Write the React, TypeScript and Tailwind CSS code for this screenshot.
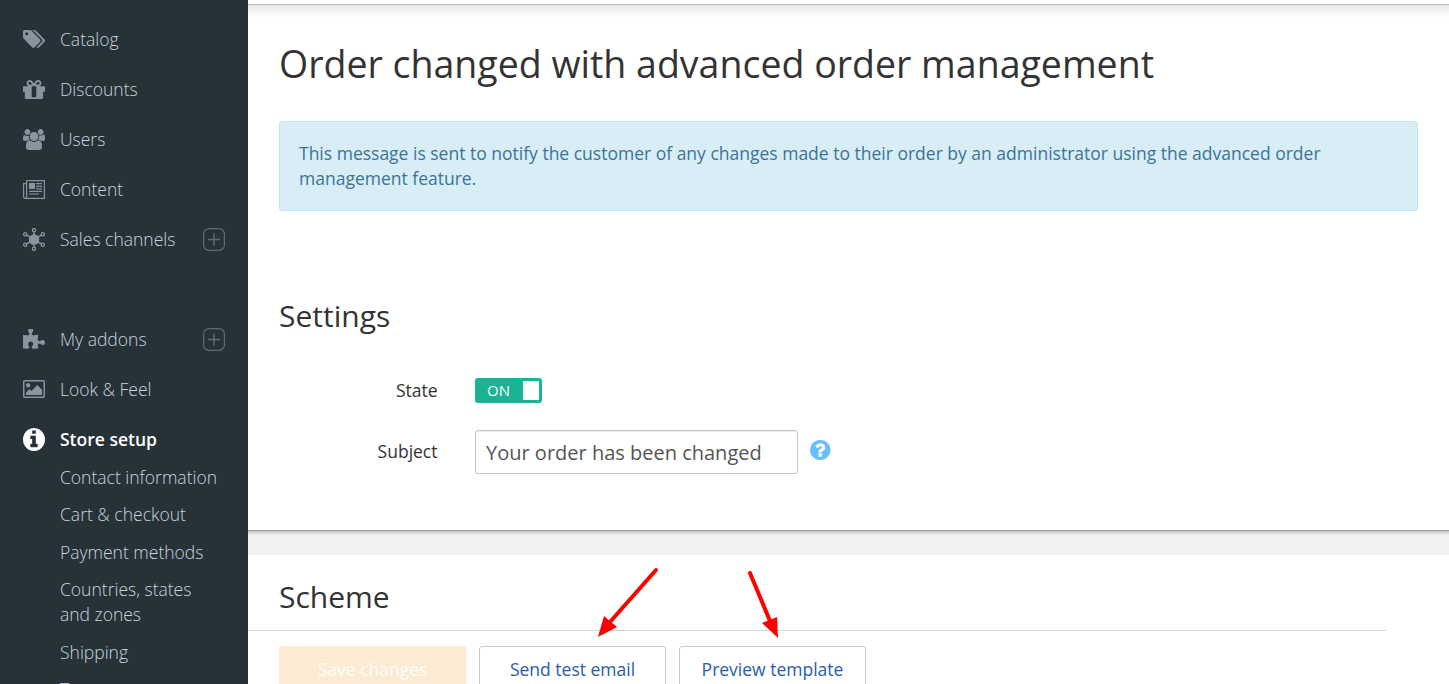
import type { ReactNode } from 'react';

type IconProps = { className: string; viewBox: string; children: ReactNode };

function Icon({ className, viewBox, children }: IconProps) {
  return (
    <svg className={className} viewBox={viewBox} preserveAspectRatio="none" fill="currentColor" aria-hidden="true">
      {children}
    </svg>
  );
}

const tags = (
  <Icon className="h-[18px] w-[22px]" viewBox="0 128 1899 1515">
    <path d="M448 448q0-53-37.5-90.5t-90.5-37.5-90.5 37.5-37.5 90.5 37.5 90.5 90.5 37.5 90.5-37.5 37.5-90.5zm1067 576q0 53-37 90l-491 492q-39 37-91 37-53 0-90-37l-715-716q-38-37-64.5-101t-26.5-117v-416q0-52 38-90t90-38h416q53 0 117 26.5t102 64.5l715 714q37 39 37 91zm384 0q0 53-37 90l-491 492q-39 37-91 37-36 0-59-14t-53-45l470-470q37-37 37-90 0-52-37-91l-715-714q-38-38-102-64.5t-117-26.5h224q53 0 117 26.5t102 64.5l715 714q37 39 37 91z" />
  </Icon>
);

const gift = (
  <Icon className="h-[19px] w-[22px]" viewBox="128 192 1536 1344">
    <path d="M1056 1356v-716h-320v716q0 25 18 38.5t46 13.5h192q28 0 46-13.5t18-38.5zm-456-844h195l-126-161q-26-31-69-31-40 0-68 28t-28 68 28 68 68 28zm688-96q0-40-28-68t-68-28q-43 0-69 31l-125 161h194q40 0 68-28t28-68zm376 256v320q0 14-9 23t-23 9h-96v416q0 40-28 68t-68 28h-1088q-40 0-68-28t-28-68v-416h-96q-14 0-23-9t-9-23v-320q0-14 9-23t23-9h440q-93 0-158.5-65.5t-65.5-158.5 65.5-158.5 158.5-65.5q107 0 168 77l128 165 128-165q61-77 168-77 93 0 158.5 65.5t65.5 158.5-65.5 158.5-158.5 65.5h440q14 0 23 9t9 23z" />
  </Icon>
);

const users = (
  <Icon className="h-[21px] w-[22px]" viewBox="64 0 1920 1792">
    <path d="M657 896q-162 5-265 128h-134q-82 0-138-40.5t-56-118.5q0-353 124-353 6 0 43.5 21t97.5 42.5 119 21.5q67 0 133-23-5 37-5 66 0 159 93 293zm1071 637q0 120-73 189.5t-194 69.5h-874q-121 0-194-69.5t-73-189.5q0-53 3.5-103.5t14-109 26.5-108.5 43-97.5 62-81 85.5-53.5 111.5-20q10 0 43 21.5t73 48 107 48 135 21.5 135-21.5 107-48 73-48 43-21.5q61 0 111.5 20t85.5 53.5 62 81 43 97.5 26.5 108.5 14 109 3.5 103.5zm-1024-1277q0 106-75 181t-181 75-181-75-75-181 75-181 181-75 181 75 75 181zm704 384q0 159-112.5 271.5t-271.5 112.5-271.5-112.5-112.5-271.5 112.5-271.5 271.5-112.5 271.5 112.5 112.5 271.5zm576 225q0 78-56 118.5t-138 40.5h-134q-103-123-265-128 93-134 93-293 0-29-5-66 66 23 133 23 59 0 119-21.5t97.5-42.5 43.5-21q124 0 124 353zm-128-609q0 106-75 181t-181 75-181-75-75-181 75-181 181-75 181 75 75 181z" />
  </Icon>
);

const newspaper = (
  <Icon className="h-[19px] w-[22px]" viewBox="0 0 22 19">
    <path d="M3.6.6h17.8v17.8H2.2A1.6 1.6 0 0 1 .6 16.8V3.6h3M3.6.6v16a1.5 1.5 0 0 1-1.5 1.7" fill="none" stroke="currentColor" strokeWidth="1.2" />
    <path d="M6 3h6v6H6zM13 3h6v1.2h-6zM13 5.8h6V7h-6zM13 8.2h6v1.2h-6zM6 10.8h13V12H6zM6 13.4h10v1.2H6z" />
  </Icon>
);

const hub = (
  <Icon className="h-[23px] w-[22px]" viewBox="0 0 22 23">
    <circle cx="11" cy="11.5" r="5.3" />
    <g fill="none" stroke="currentColor" strokeWidth="1.3">
      <circle cx="11" cy="2.2" r="1.6" />
      <circle cx="11" cy="20.8" r="1.6" />
      <circle cx="2.2" cy="6.3" r="1.6" />
      <circle cx="19.8" cy="6.3" r="1.6" />
      <circle cx="2.2" cy="16.7" r="1.6" />
      <circle cx="19.8" cy="16.7" r="1.6" />
      <path d="M11 3.8v15.4M3.6 7.1l14.8 8.8M18.4 7.1 3.6 15.9" />
    </g>
  </Icon>
);

const puzzle = (
  <Icon className="h-[21px] w-[22px]" viewBox="91 64 1664 1600">
    <path d="M1755 1099q0 81-44.5 135t-123.5 54q-41 0-77.5-17.5t-59-38-56.5-38-71-17.5q-110 0-110 124 0 39 16 115t15 115v5q-22 0-33 1-34 3-97.5 11.5t-115.5 13.5-98 5q-61 0-103-26.5t-42-83.5q0-37 17.5-71t38-56.5 38-59 17.5-77.5q0-79-54-123.5t-135-44.5q-84 0-143 45.5t-59 127.5q0 43 15 83t33.5 64.5 33.5 53 15 50.5q0 45-46 89-37 35-117 35-95 0-245-24-9-2-27.5-4t-27.5-4l-13-2q-1 0-3-1-2 0-2-1v-1024q2 1 17.5 3.5t34 5 21.5 3.5q150 24 245 24 80 0 117-35 46-44 46-89 0-22-15-50.5t-33.5-53-33.5-64.5-15-83q0-82 59-127.5t144-45.5q80 0 134 44.5t54 123.5q0 41-17.5 77.5t-38 59-38 56.5-17.5 71q0 57 42 83.5t103 26.5q64 0 180-15t163-17v2q-1 2-3.5 17.5t-5 34-3.5 21.5q-24 150-24 245 0 80 35 117 44 46 89 46 22 0 50.5-15t53-33.5 64.5-33.5 83-15q82 0 127.5 59t45.5 143z" />
  </Icon>
);

const picture = (
  <Icon className="h-[18px] w-[22px]" viewBox="-64 128 1920 1536">
    <path d="M576 576q0 80-56 136t-136 56-136-56-56-136 56-136 136-56 136 56 56 136zm1024 384v448h-1408v-192l320-320 160 160 512-512zm96-704h-1600q-13 0-22.5 9.5t-9.5 22.5v1216q0 13 9.5 22.5t22.5 9.5h1600q13 0 22.5-9.5t9.5-22.5v-1216q0-13-9.5-22.5t-22.5-9.5zm160 32v1216q0 66-47 113t-113 47h-1600q-66 0-113-47t-47-113v-1216q0-66 47-113t113-47h1600q66 0 113 47t47 113z" />
  </Icon>
);

const info = (
  <Icon className="h-[23px] w-[22px]" viewBox="128 128 1536 1536">
    <path d="M1152 1376v-160q0-14-9-23t-23-9h-96v-512q0-14-9-23t-23-9h-320q-14 0-23 9t-9 23v160q0 14 9 23t23 9h96v320h-96q-14 0-23 9t-9 23v160q0 14 9 23t23 9h448q14 0 23-9t9-23zm-128-896v-160q0-14-9-23t-23-9h-192q-14 0-23 9t-9 23v160q0 14 9 23t23 9h192q14 0 23-9t9-23zm640 416q0 209-103 385.5t-279.5 279.5-385.5 103-385.5-103-279.5-279.5-103-385.5 103-385.5 279.5-279.5 385.5-103 385.5 103 279.5 279.5 103 385.5z" />
  </Icon>
);

type Item = { label: string; icon: ReactNode; plus?: boolean; active?: boolean };

const topItems: Item[] = [
  { label: 'Catalog', icon: tags },
  { label: 'Discounts', icon: gift },
  { label: 'Users', icon: users },
  { label: 'Content', icon: newspaper },
  { label: 'Sales channels', icon: hub, plus: true },
];

const setupItems: Item[] = [
  { label: 'My addons', icon: puzzle, plus: true },
  { label: 'Look & Feel', icon: picture },
  { label: 'Store setup', icon: info, active: true },
];

const subItems = [
  'Contact information',
  'Cart & checkout',
  'Payment methods',
  'Countries, states and zones',
  'Shipping',
  'Taxes',
];

function NavItem({ label, icon, plus, active }: Item) {
  return (
    <li className="flex h-[50px] items-center pr-[23px] pl-[23px]">
      <span className={active ? 'flex w-[37px] text-white' : 'flex w-[37px] text-[#8b949e]'}>{icon}</span>
      <span
        className={
          active
            ? 'flex-1 text-[17.5px] font-semibold whitespace-nowrap text-white'
            : 'flex-1 text-[17.5px] font-light whitespace-nowrap text-[#c9d3de]'
        }
      >
        {label}
      </span>
      {plus && (
        <svg className="h-[23px] w-[22px]" viewBox="0 0 22 23" fill="none" stroke="#5f6b72" aria-hidden="true">
          <rect x=".6" y=".6" width="20.8" height="21.8" rx="5.5" strokeWidth="1.2" />
          <path d="M5 11.5h12M11 5.5v12" strokeWidth="1.5" />
        </svg>
      )}
    </li>
  );
}

function Sidebar() {
  return (
    <nav className="h-full w-[248px] shrink-0 overflow-hidden bg-[#263238] pt-[14px]">
      <ul>
        {topItems.map((item) => (
          <NavItem key={item.label} {...item} />
        ))}
      </ul>
      <ul className="mt-[50px]">
        {setupItems.map((item) => (
          <NavItem key={item.label} {...item} />
        ))}
      </ul>
      <ul className="flex flex-col gap-[12.5px] pt-[0.8px] pr-[26px] pl-[60px] text-[17.5px] leading-[25px] font-light text-[#c9d3de]">
        {subItems.map((label) => (
          <li key={label}>{label}</li>
        ))}
      </ul>
    </nav>
  );
}

function Arrows() {
  return (
    <svg className="pointer-events-none absolute top-[10px] left-[340px] h-[80px] w-[200px]" viewBox="588 565 200 80" aria-hidden="true">
      <g stroke="#ff0000" strokeWidth="4" strokeLinecap="round">
        <path d="M656 570 610 622" />
        <path d="M750 573 770 621" />
      </g>
      <g fill="#ff0000">
        <path d="M598 637 604 616 617 627z" />
        <path d="M778 638 762 623 777 617z" />
      </g>
    </svg>
  );
}

export default function App() {
  return (
    <div className="flex h-[684px] w-full overflow-hidden bg-white font-['Open_Sans',sans-serif]">
      <Sidebar />
      <main className="flex min-w-0 flex-1 flex-col">
        <section className="h-[530px] shrink-0 pt-1">
          <div className="h-[13px] border-t border-[#bbbbbb] bg-linear-to-b from-[#e7e7e7] to-white" />
          <div className="pr-[31px] pl-[31px]">
            <h1 className="mt-[21px] text-[37.5px] leading-[52px] whitespace-nowrap text-[#333333]">
              Order changed with advanced order management
            </h1>
            <div className="mt-[31px] h-[90px] rounded-[3px] border border-[#bce8f1] bg-[#d9edf7] pt-[19px] pr-[60px] pl-[19px] text-[17.5px] leading-[25px] text-[#3a7596]">
              This message is sent to notify the customer of any changes made to their order by an administrator using the advanced order
              management feature.
            </div>
            <h2 className="mt-[84px] text-[30px] leading-[42px] text-[#333333]">Settings</h2>
            <div className="mt-[40px] flex h-[26px] items-center">
              <span className="w-[159px] pr-[0.5px] text-right text-[17.5px] text-[#333333]">State</span>
              <button className="ml-[37px] flex h-[25px] w-[67px] items-center justify-between rounded-[3px] bg-[#1ab394] pr-[3px] pl-[12px] text-[15px] text-white">
                ON
                <span className="h-[19px] w-[16px] bg-white" />
              </button>
            </div>
            <div className="mt-[27px] flex h-[44px] items-center">
              <span className="w-[159px] pr-[0.5px] pb-[2px] text-right text-[17.5px] text-[#333333]">Subject</span>
              <div className="ml-[37px] flex h-[44px] w-[323px] items-center rounded-[3px] border border-[#c4c4c4] pt-[2px] pl-[10px] text-[20px] whitespace-nowrap text-[#555555] shadow-[inset_0_1px_1px_rgba(0,0,0,0.075)]">
                Your order has been changed
              </div>
              <Icon className="mb-[4px] ml-[12px] h-[20px] w-[20.5px] text-[#66bfff]" viewBox="128 128 1536 1536">
                <path d="M1024 1376v-192q0-14-9-23t-23-9h-192q-14 0-23 9t-9 23v192q0 14 9 23t23 9h192q14 0 23-9t9-23zm256-672q0-88-55.5-163t-138.5-116-170-41q-243 0-371 213-15 24 8 42l132 100q7 6 19 6 16 0 25-12 53-68 86-92 34-24 86-24 48 0 85.5 26t37.5 59q0 38-20 61t-68 45q-63 28-115.5 86.5t-52.5 125.5v36q0 14 9 23t23 9h192q14 0 23-9t9-23q0-19 21.5-49.5t54.5-49.5q32-18 49-28.5t46-35 44.5-48 28-60.5 12.5-81zm384 192q0 209-103 385.5t-279.5 279.5-385.5 103-385.5-103-279.5-279.5-103-385.5 103-385.5 279.5-279.5 385.5-103 385.5 103 279.5 279.5 103 385.5z" />
              </Icon>
            </div>
          </div>
        </section>
        <div className="h-[25px] shrink-0 border-t border-[#a0a0a0] bg-linear-to-b from-[#c0c0c0] to-[#f2f2f2] to-[4px]" />
        <section className="relative h-[129px] shrink-0 overflow-hidden">
          <div className="mr-[63px] h-[76px] border-b border-[#d3d3d3] pt-[21px] pl-[31px]">
            <h2 className="text-[30px] leading-[42px] text-[#333333]">Scheme</h2>
          </div>
          <div className="mt-[15px] flex gap-[13px] pl-[31px] text-[17.5px]">
            <button className="h-[46px] w-[187px] rounded-[3px] bg-[#fcebd3] text-white/90">Save changes</button>
            <button className="h-[46px] w-[187px] rounded-[3px] border border-[#cccccc] bg-white text-[#2a5caa]">Send test email</button>
            <button className="h-[46px] w-[187px] rounded-[3px] border border-[#cccccc] bg-white text-[#2a5caa]">Preview template</button>
          </div>
          <Arrows />
        </section>
      </main>
    </div>
  );
}
